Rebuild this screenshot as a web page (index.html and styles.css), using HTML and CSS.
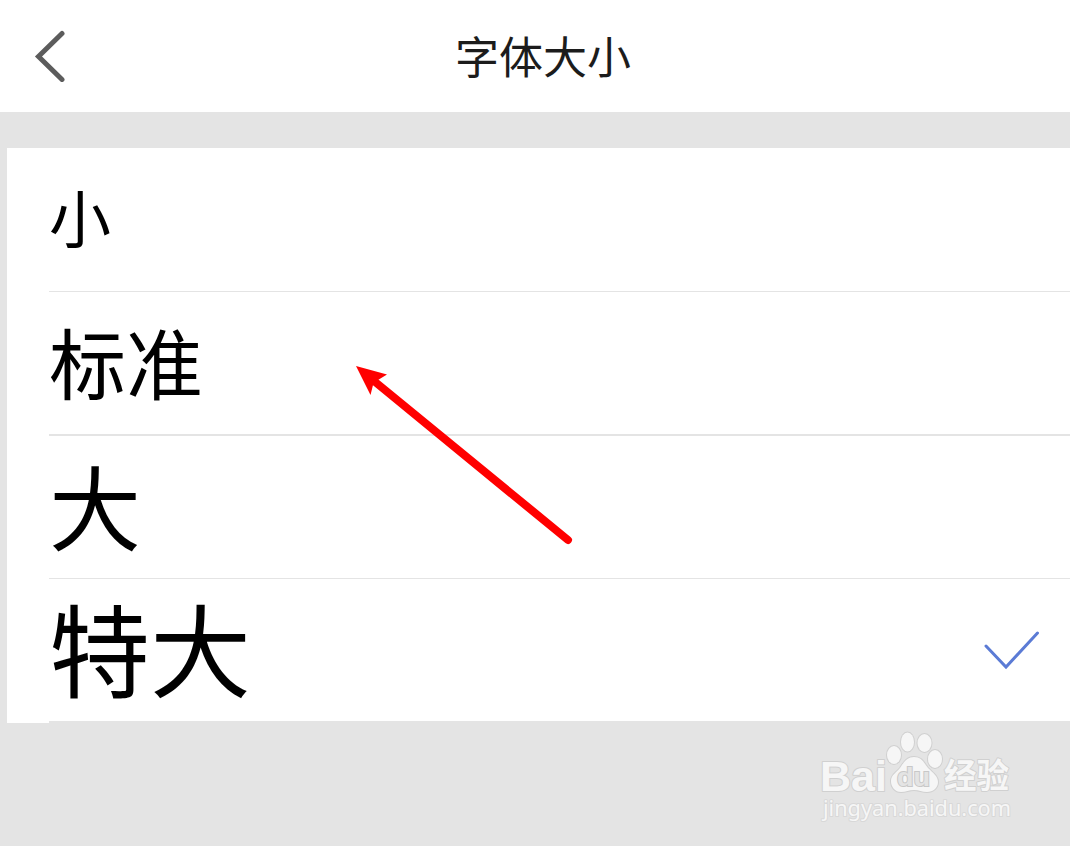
FILE: index.html
```
<!DOCTYPE html>
<html lang="zh-CN">
<head>
	<meta charset="utf-8">
	<title>字体大小</title>
	<link rel="stylesheet" href="styles.css">
</head>
<body>
	<header class="header">
		<svg class="back" width="32" height="52" viewBox="0 0 32 52">
			<path d="M28 3.500L4.500 26.500L28 49.500"/>
		</svg>
		<h1>字体大小</h1>
	</header>
	<ul class="sizes">
		<li class="size small"><span>小</span></li>
		<li class="size normal"><span>标准</span></li>
		<li class="size large"><span>大</span></li>
		<li class="size xlarge">
			<span>特大</span>
			<svg class="check" width="56" height="40" viewBox="0 0 56 40">
				<path d="M2 16L22 37L53.500 3"/>
			</svg>
		</li>
	</ul>
	<svg class="arrow" width="230" height="190" viewBox="350 360 230 190">
		<path class="shaft" d="M374 381L568 540"/>
		<path class="head" d="M356 366L387 374.500L378 380L373 385L370.500 395Z"/>
	</svg>
	<svg class="watermark" width="220" height="110" viewBox="810 725 220 110">
		<g class="mark">
			<text class="brand" x="820" y="790.500" textLength="67" lengthAdjust="spacingAndGlyphs">Bai</text>
			<ellipse cx="894" cy="755" rx="7" ry="9"/>
			<ellipse cx="907.500" cy="742" rx="6.500" ry="9.500"/>
			<ellipse cx="924.500" cy="743" rx="7" ry="9"/>
			<ellipse cx="935" cy="759" rx="7" ry="9"/>
			<path d="M914 757C922 757 924 763 928 768C933 773 938 776 938 782C938 788 933 792 927 792C922 792 919 790 914 790C909 790 906 792 901 792C895 792 891 787 891 781C891 775 896 773 900 768C904 762 907 757 914 757Z"/>
			<text class="cn" x="944" y="788" textLength="65" lengthAdjust="spacingAndGlyphs">经验</text>
			<text class="url" x="823" y="816" textLength="188" lengthAdjust="spacingAndGlyphs">jingyan.baidu.com</text>
		</g>
		<text class="du" x="897" y="786" textLength="33" lengthAdjust="spacingAndGlyphs">du</text>
	</svg>
</body>
</html>
```
FILE: styles.css
```
body {
	margin: 0;
	height: 846px;
	overflow: hidden;
	background-color: #e4e4e4;
	font-family: "Noto Sans CJK SC", sans-serif;
}
.header {
	display: grid;
	grid-template-columns: 86px 1fr 70px;
	align-items: center;
	height: 112px;
	background-color: #fff;
}
.back {
	margin-left: 34px;
}
.back path {
	fill: none;
	stroke: #5c5c5c;
	stroke-width: 5;
	stroke-linecap: round;
}
h1 {
	margin: 0;
	padding-bottom: 3px;
	text-align: center;
	color: #1c1c1c;
	font-size: 44px;
	font-weight: normal;
	line-height: 64px;
}
.sizes {
	margin: 36px 0 0 7px;
	padding: 0 0 0 42px;
	list-style: none;
	background-color: #fff;
	height: 575px;
	box-sizing: border-box;
}
.size {
	display: flex;
	align-items: center;
	justify-content: space-between;
	box-sizing: border-box;
	height: 144px;
	padding-right: 30px;
	border-bottom: 1px solid #e4e4e4;
	color: #000;
	line-height: 1;
}
.size span {
	padding-bottom: 7px;
}
.small {
	font-size: 62px;
}
.normal {
	border-bottom-width: 2px;
	font-size: 77px;
}
.normal span {
	padding-bottom: 5px;
}
.large {
	height: 143px;
	font-size: 92px;
}
.xlarge {
	border-bottom-width: 2px;
	font-size: 101px;
}
.check path {
	fill: none;
	stroke: #5b7bd5;
	stroke-width: 3;
	stroke-linecap: round;
}
.arrow {
	position: absolute;
	left: 350px;
	top: 360px;
}
.shaft {
	fill: none;
	stroke: #f00;
	stroke-width: 8;
	stroke-linecap: round;
}
.head {
	fill: #f00;
}
.watermark {
	position: absolute;
	left: 810px;
	top: 725px;
}
.mark {
	fill: #f6f6f6;
	stroke: #d0d0d0;
	stroke-width: 2;
	stroke-linejoin: round;
	paint-order: stroke;
}
.brand {
	font: bold 42px "Liberation Sans", sans-serif;
}
.cn {
	font: bold 34px "Noto Sans CJK SC", sans-serif;
}
.url {
	stroke: #d8d8d8;
	font: 22px "Noto Sans", sans-serif;
}
.du {
	fill: #e4e4e4;
	stroke: #c8c8c8;
	stroke-width: 2;
	paint-order: stroke;
	font: bold 26px "Liberation Sans", sans-serif;
}
```
